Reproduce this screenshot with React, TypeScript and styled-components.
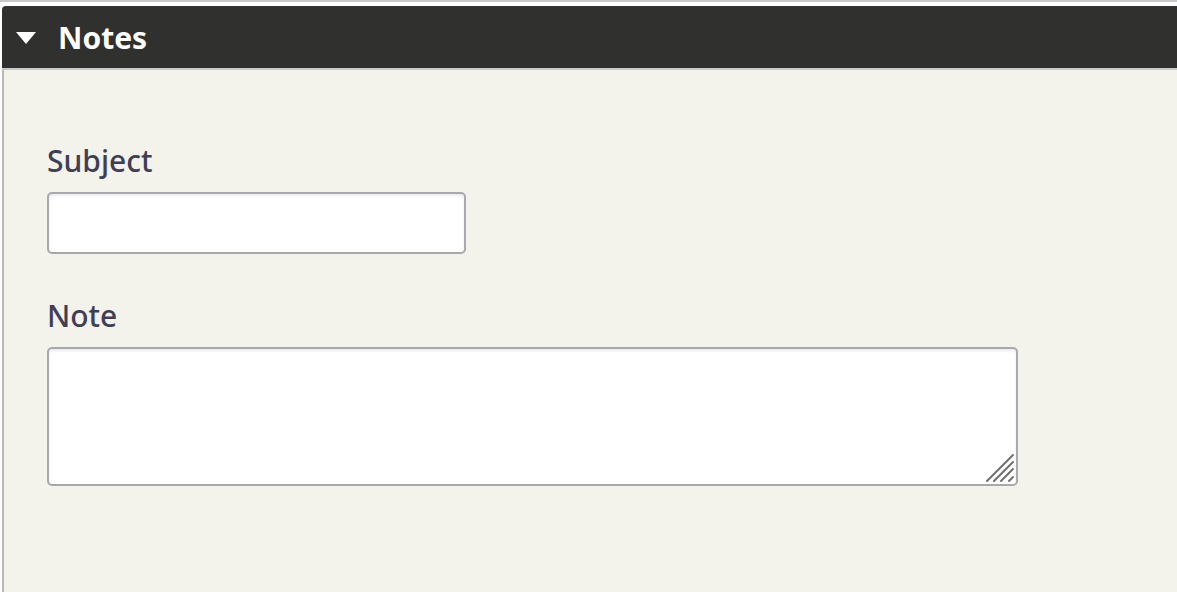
import React from "react";
import styled, { createGlobalStyle } from "styled-components";

const Global = createGlobalStyle`
  html, body { margin: 0; padding: 0; background: #ffffff; }
  body { font-family: "Noto Sans", "Open Sans", sans-serif; }
`;

const Page = styled.div`
  border-top: 2px solid #c8c8c8;
  padding: 4px 0 0 2px;
  height: 590px;
  overflow: hidden;
`;

const Section = styled.section`
  display: flex;
  flex-direction: column;
  height: 100%;
`;

const Header = styled.div`
  display: flex;
  align-items: center;
  gap: 22px;
  height: 62px;
  padding-left: 14px;
  background: #30302e;
  border-top-left-radius: 4px;
  border-bottom: 2px solid #c9c9c9;
  color: #ffffff;
  flex: none;
`;

const Caret = styled.svg`
  width: 20px;
  height: 13px;
  display: block;
  margin-top: 2px;
`;

const Title = styled.h2`
  margin: 0;
  font-size: 30px;
  font-weight: 700;
  line-height: 1;
  padding-top: 2px;
`;

const Body = styled.div`
  flex: 1;
  background: #f3f2eb;
  border-left: 2px solid #b9b9b9;
  padding: 76px 0 0 43px;
  display: flex;
  flex-direction: column;
`;

const Field = styled.div<{ $mb?: number }>`
  display: flex;
  flex-direction: column;
  margin-bottom: ${(p) => p.$mb ?? 0}px;
`;

const Label = styled.label`
  font-size: 30px;
  font-weight: 500;
  color: #403e55;
  line-height: 1;
  margin-bottom: 16px;
`;

const Input = styled.input`
  box-sizing: border-box;
  width: 419px;
  height: 62px;
  border: 2px solid #a8a8ad;
  border-radius: 5px;
  background: #fff;
  box-shadow: inset 0 2px 3px rgba(0,0,0,0.08);
`;

const AreaWrap = styled.div`
  position: relative;
  width: 971px;
  height: 139px;
`;

const TextArea = styled.textarea`
  box-sizing: border-box;
  display: block;
  width: 100%;
  height: 100%;
  border: 2px solid #a8a8ad;
  border-radius: 5px;
  background: #fff;
  box-shadow: inset 0 2px 3px rgba(0,0,0,0.08);
  resize: none;
`;

const Grip = styled.svg`
  position: absolute;
  right: 3px;
  bottom: 3px;
  width: 30px;
  height: 30px;
  pointer-events: none;
`;

export default function App() {
  return (
    <>
      <Global />
      <Page>
        <Section>
          <Header>
            <Caret viewBox="0 0 20 13">
              <polygon points="0,0 20,0 10,12" fill="#ffffff" />
            </Caret>
            <Title>Notes</Title>
          </Header>
          <Body>
            <Field $mb={47}>
              <Label>Subject</Label>
              <Input type="text" />
            </Field>
            <Field>
              <Label>Note</Label>
              <AreaWrap>
                <TextArea />
                <Grip viewBox="0 0 30 30">
                  <g stroke="#6e6e6e" strokeWidth="2" strokeLinecap="round">
                    <line x1="2" y1="28" x2="28" y2="2" />
                    <line x1="9" y1="28" x2="28" y2="9" />
                    <line x1="16" y1="28" x2="28" y2="16" />
                    <line x1="24" y1="28" x2="28" y2="24" />
                  </g>
                </Grip>
              </AreaWrap>
            </Field>
          </Body>
        </Section>
      </Page>
    </>
  );
}
